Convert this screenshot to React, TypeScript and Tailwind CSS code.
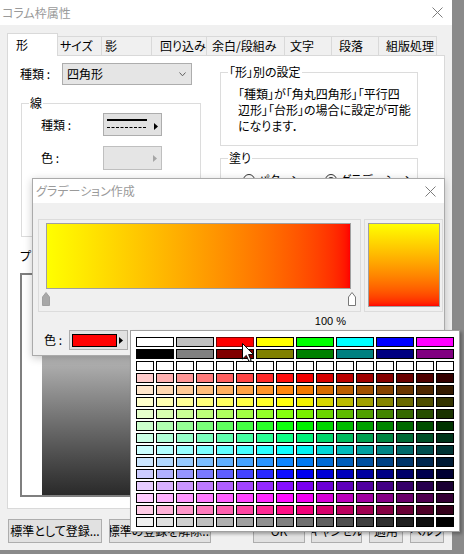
import React from 'react';

// palette data
const HUES = [0, 30, 60, 90, 120, 150, 180, 210, 240, 270, 300, 330];

const BASIC_1 = ['#ffffff', '#c0c0c0', '#ff0000', '#ffff00', '#00ff00', '#00ffff', '#0000ff', '#ff00ff'];
const BASIC_2 = ['#000000', '#808080', '#800000', '#808000', '#008000', '#008080', '#000080', '#800080'];

const GRID: string[][] = [
  Array.from({ length: 16 }, () => '#ffffff'),
  ...HUES.map((h) => Array.from({ length: 16 }, (_, j) => `hsl(${h} 100% ${90 - (j * 80) / 15}%)`)),
  Array.from({ length: 16 }, (_, j) => {
    const v = 240 - j * 16;
    return `rgb(${v} ${v} ${v})`;
  }),
];

const TABS = [
  { label: '形', cls: 'w-[51px] pl-[8px]', active: true },
  { label: 'サイズ', cls: 'w-[44px] pl-[2px]' },
  { label: '影', cls: 'w-[50px] pl-[3px]' },
  { label: '回り込み', cls: 'w-[55px] pl-[8px]' },
  { label: '余白/段組み', cls: 'w-[78px] pl-[5px]' },
  { label: '文字', cls: 'w-[47px] pl-[5px]' },
  { label: '段落', cls: 'w-[47px] pl-[7px]' },
  { label: '組版処理', cls: 'w-[58px] pl-[7px]' },
];

const CloseIcon = () => (
  <svg width="11" height="11" viewBox="0 0 11 11">
    <path d="M0.5 0.5L10.5 10.5M10.5 0.5L0.5 10.5" stroke="#7d7d7d" strokeWidth="1" fill="none" />
  </svg>
);

const Group: React.FC<{ label: string; cls: string; children?: React.ReactNode }> = ({ label, cls, children }) => (
  <div className={`border border-[#dcdcdc] ${cls}`}>
    <span className="block w-fit -mt-[8px] ml-[7px] px-[1px] bg-white leading-[14px]">{label}</span>
    {children}
  </div>
);

const Btn: React.FC<{ cls: string; children: React.ReactNode }> = ({ cls, children }) => (
  <div className={`h-[24px] border border-[#adadad] bg-[#e1e1e1] flex items-center justify-center whitespace-nowrap overflow-hidden ${cls}`}>
    {children}
  </div>
);

const Radio: React.FC<{ on?: boolean }> = ({ on }) => (
  <span className="w-[12px] h-[12px] rounded-full border border-[#333333] bg-white flex items-center justify-center">
    {on && <span className="w-[6px] h-[6px] rounded-full bg-[#333333]" />}
  </span>
);

const App: React.FC = () => {
  return (
    <div className="relative w-[464px] h-[554px] overflow-hidden bg-[#8a8a8a] text-[12px] leading-[16px] text-black [font-family:'Noto_Sans_CJK_JP','Noto_Sans',sans-serif] [font-feature-settings:'palt']">
      {/* main window */}
      <div className="w-[452px] h-[550px] bg-[#f0f0f0] flex flex-col">
        <div className="h-[25px] shrink-0 bg-white flex items-center justify-between pl-[2px] pr-[9px]">
          <span className="text-[#9a9a9a]">コラム枠属性</span>
          <CloseIcon />
        </div>

        <div className="px-[7px] pt-[8px]">
          <div className="relative z-10 flex items-end h-[23px]">
            {TABS.map((t) =>
              t.active ? (
                <div key={t.label} className={`h-[23px] bg-white border border-b-0 border-[#d9d9d9] flex items-center ${t.cls}`}>
                  {t.label}
                </div>
              ) : (
                <div key={t.label} className={`h-[19px] mb-[1px] border-t border-r border-[#d9d9d9] flex items-center ${t.cls}`}>
                  {t.label}
                </div>
              )
            )}
          </div>

          <div className="-mt-px h-[454px] border border-[#d9d9d9] bg-white flex pl-[12px] pt-[7px]">
            {/* left column */}
            <div className="w-[181px]">
              <div className="flex items-center h-[22px]">
                <span className="w-[42px]">種類 :</span>
                <div className="w-[130px] h-[22px] border border-[#adadad] bg-[#e5e5e5] flex items-center justify-between pl-[4px] pr-[5px]">
                  <span>四角形</span>
                  <svg width="7" height="5" viewBox="0 0 7 5">
                    <polyline points="0.5,0.5 3.5,3.8 6.5,0.5" stroke="#606060" fill="none" />
                  </svg>
                </div>
              </div>

              <Group label="線" cls="mt-[18px] ml-[1px] w-[180px] h-[134px]">
                <div className="flex items-center mt-[3px] pl-[19px]">
                  <span className="w-[62px]">種類 :</span>
                  <div className="w-[59px] h-[23px] border border-[#adadad] bg-[#e1e1e1]">
                    <svg width="57" height="21" viewBox="0 0 57 21">
                      <rect x="3" y="5" width="40" height="2" fill="#000" />
                      <line x1="3" y1="13.5" x2="43" y2="13.5" stroke="#000" strokeDasharray="3 1.5" />
                      <path d="M50 9L54 12.5L50 16Z" fill="#000" />
                    </svg>
                  </div>
                </div>
                <div className="flex items-center mt-[10px] pl-[19px]">
                  <span className="w-[62px]">色 :</span>
                  <div className="w-[59px] h-[24px] border border-[#bfbfbf] bg-[#e5e5e5] flex items-center justify-end pr-[4px]">
                    <svg width="4" height="7" viewBox="0 0 4 7">
                      <path d="M0 0L4 3.5L0 7Z" fill="#a6a6a6" />
                    </svg>
                  </div>
                </div>
              </Group>

              <div className="mt-[11px]">プレビュー</div>
              <div className="mt-[9px] w-[181px] h-[224px] border-2 border-[#7f7f7f] bg-white flex flex-col justify-end">
                <div className="ml-[20px] w-[138px] h-[202px] bg-linear-to-b from-[#ffffff] to-[#2a2a2a]" />
              </div>
            </div>

            {/* right column */}
            <div className="ml-[19px] w-[198px] pt-[9px]">
              <Group label="「形」別の設定" cls="h-[74px]">
                <p className="mt-[7px] pl-[17px] leading-[16px]">
                  「種類」が「角丸四角形」「平行四
                  <br />
                  辺形」「台形」の場合に設定が可能
                  <br />
                  になります．
                </p>
              </Group>
              <Group label="塗り" cls="mt-[12px] h-[160px]">
                <div className="mt-[8px] pl-[22px] flex items-center h-[14px]">
                  <div className="w-[82px] flex items-center gap-[3px]">
                    <Radio />
                    <span>パターン</span>
                  </div>
                  <div className="flex items-center gap-[3px]">
                    <Radio on />
                    <span>グラデーション</span>
                  </div>
                </div>
              </Group>
            </div>
          </div>
        </div>

        <div className="mt-[10px] flex pl-[8px]">
          <Btn cls="w-[94px]">標準として登録...</Btn>
          <Btn cls="ml-[7px] w-[102px]">標準の登録を解除...</Btn>
          <Btn cls="ml-[42px] w-[52px]">OK</Btn>
          <Btn cls="ml-[6px] w-[51px]">キャンセル</Btn>
          <Btn cls="ml-[7px] w-[34px]">適用</Btn>
          <Btn cls="ml-[7px] w-[34px]">ヘルプ</Btn>
        </div>
      </div>

      {/* gradient dialog */}
      <div className="absolute left-[32px] top-[178px] w-[413px] h-[178px] border border-[#aaaaaa] bg-[#f0f0f0] shadow-[0_2px_8px_rgba(0,0,0,0.22)]">
        <div className="h-[24px] bg-white flex items-center justify-between pl-[3px] pr-[8px]">
          <span className="text-[#9a9a9a]">グラデーション作成</span>
          <CloseIcon />
        </div>
        <div className="flex mt-[16px] ml-[5px]">
          <div className="w-[323px] h-[93px] border border-[#dcdcdc] pl-[7px] pt-[3px]">
            <div className="w-[305px] h-[66px] border border-[#a0a0a0] bg-linear-to-r from-[#ffff00] to-[#ff0000]" />
            <div className="flex justify-between w-[314px] -ml-[4px] mt-[3px]">
              <svg width="8" height="14" viewBox="0 0 8 14">
                <path d="M0.5 5L4 0.5L7.5 5V13.5H0.5Z" fill="#a8a8a8" stroke="#a0a0a0" />
              </svg>
              <svg width="8" height="14" viewBox="0 0 8 14">
                <path d="M0.5 5L4 0.5L7.5 5V13.5H0.5Z" fill="#ffffff" stroke="#787878" />
              </svg>
            </div>
          </div>
          <div className="ml-[3px] w-[79px] h-[93px] border border-[#dcdcdc] pl-[3px] pt-[3px]">
            <div className="w-[72px] h-[84px] border border-[#a0a0a0] bg-linear-to-b from-[#ffff00] to-[#ff0000]" />
          </div>
        </div>
        <div className="ml-[5px] w-[323px] h-[18px] flex items-center justify-end pr-[15px] text-[11px] [font-family:'Liberation_Sans',sans-serif]">
          100 %
        </div>
        <div className="flex items-center h-[20px] pl-[11px]">
          <span className="w-[25px]">色 :</span>
          <div className="w-[59px] h-[20px] border border-[#adadad] bg-[#e1e1e1] flex items-center pl-[2px]">
            <div className="w-[45px] h-[13px] border border-black bg-[#ff0000]" />
            <svg width="4" height="7" viewBox="0 0 4 7" className="ml-[2px]">
              <path d="M0 0L4 3.5L0 7Z" fill="#000" />
            </svg>
          </div>
        </div>
      </div>

      {/* color palette popup */}
      <div className="absolute left-[130px] top-[330px] w-[330px] h-[202px] border border-[#a0a0a0] bg-white shadow-[2px_2px_3px_rgba(0,0,0,0.3)] pl-[5px] pt-[6px] flex flex-col gap-[2px]">
        <div className="flex gap-[2px]">
          {BASIC_1.map((c, i) => (
            <div
              key={i}
              className={i === 2 ? 'w-[38px] h-[10px] border border-[#7a0000]' : 'w-[38px] h-[10px] border border-black'}
              style={{ background: c }}
            />
          ))}
        </div>
        <div className="flex gap-[2px]">
          {BASIC_2.map((c, i) => (
            <div key={i} className="w-[38px] h-[10px] border border-black" style={{ background: c }} />
          ))}
        </div>
        {GRID.map((row, r) => (
          <div key={r} className="flex gap-[2px]">
            {row.map((c, j) => (
              <div key={j} className="w-[18px] h-[10px] border border-black" style={{ background: c }} />
            ))}
          </div>
        ))}
      </div>

      {/* mouse cursor */}
      <svg className="absolute left-[242px] top-[343px]" width="12" height="20" viewBox="0 0 12 20">
        <path d="M0.5 0.5V16L4.3 12.4L7 18.5L9.2 17.5L6.6 11.6H11.5Z" fill="#fff" stroke="#000" strokeWidth="1" strokeLinejoin="round" />
      </svg>
    </div>
  );
};

export default App;
